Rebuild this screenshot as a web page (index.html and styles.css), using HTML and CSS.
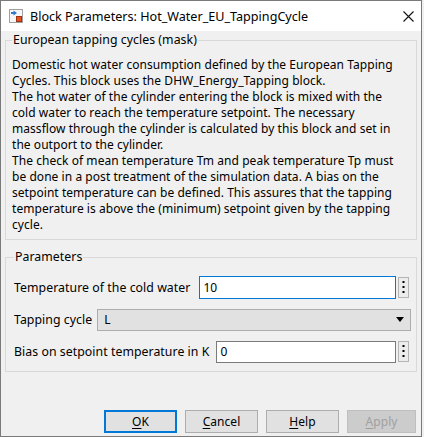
FILE: index.html
```html
<!DOCTYPE html>
<html lang="en">
<head>
<meta charset="utf-8">
<title>Block Parameters: Hot_Water_EU_TappingCycle</title>
<link rel="stylesheet" href="styles.css">
</head>
<body>
<div class="window">
  <div class="titlebar">
    <svg class="app-icon" width="14" height="14" viewBox="0 0 14 14">
      <rect x="0.5" y="0.5" width="13" height="13" fill="#f6f6f6" stroke="#a0a0a0"/>
      <path d="M2 4h3" stroke="#2f79c9" stroke-width="2"/>
      <path d="M4.5 1.5L8 4L4.5 6.5z" fill="#2f79c9"/>
      <rect x="7.5" y="7.5" width="5" height="5" fill="#e8501e" stroke="#9a3412"/>
    </svg>
    <span class="title">Block Parameters: Hot_Water_EU_TappingCycle</span>
    <svg class="close" width="11" height="11" viewBox="0 0 11 11">
      <path d="M0.5 0.5L10.5 10.5M10.5 0.5L0.5 10.5" stroke="#111" stroke-width="1.1"/>
    </svg>
  </div>
  <div class="content">
    <fieldset class="group group-desc">
      <legend>European tapping cycles (mask)</legend>
      <p class="desc">Domestic hot water consumption defined by the European Tapping<br>Cycles. This block uses the DHW_Energy_Tapping block.<br>The hot water of the cylinder entering the block is mixed with the<br>cold water to reach the temperature setpoint. The necessary<br>massflow through the cylinder is calculated by this block and set in<br>the outport to the cylinder.<br>The check of mean temperature Tm and peak temperature Tp must<br>be done in a post treatment of the simulation data. A bias on the<br>setpoint temperature can be defined. This assures that the tapping<br>temperature is above the (minimum) setpoint given by the tapping<br>cycle.</p>
    </fieldset>
    <fieldset class="group group-params">
      <legend>Parameters</legend>
      <div class="rows">
        <div class="row">
          <span class="label">Temperature of the cold water</span>
          <div class="field field-focused">10</div>
          <div class="more">
            <svg width="3" height="13" viewBox="0 0 3 13"><rect x="0.5" y="0" width="2" height="2" fill="#000"/><rect x="0.5" y="5" width="2" height="2" fill="#000"/><rect x="0.5" y="10" width="2" height="2" fill="#000"/></svg>
          </div>
        </div>
        <div class="row">
          <span class="label label-tight">Tapping cycle</span>
          <div class="select">
            <span>L</span>
            <svg width="8" height="5" viewBox="0 0 8 5"><path d="M0 0h8L4 5z" fill="#000"/></svg>
          </div>
        </div>
        <div class="row">
          <span class="label label-bias">Bias on setpoint temperature in K</span>
          <div class="field field-short">0</div>
          <div class="more">
            <svg width="3" height="13" viewBox="0 0 3 13"><rect x="0.5" y="0" width="2" height="2" fill="#000"/><rect x="0.5" y="5" width="2" height="2" fill="#000"/><rect x="0.5" y="10" width="2" height="2" fill="#000"/></svg>
          </div>
        </div>
      </div>
    </fieldset>
    <div class="buttons">
      <div class="btn btn-default"><u>O</u>K</div>
      <div class="btn"><u>C</u>ancel</div>
      <div class="btn"><u>H</u>elp</div>
      <div class="btn btn-disabled btn-apply"><u>A</u>pply</div>
    </div>
  </div>
</div>
</body>
</html>
```
FILE: styles.css
```css
* { box-sizing: border-box; }
html, body { margin: 0; padding: 0; }
body {
  background: #f0f0f0;
  font-family: "Noto Sans", "Liberation Sans", sans-serif;
  font-size: 12px;
  letter-spacing: 0.05px;
  color: #000;
}
.window {
  width: 422px;
  height: 437px;
  border: 1px solid #7a7a7a;
  background: #f0f0f0;
  display: flex;
  flex-direction: column;
}
.titlebar {
  height: 30px;
  background: #fff;
  display: flex;
  align-items: center;
  flex: none;
}
.app-icon { margin-left: 8px; flex: none; }
.title { margin-left: 7px; font-size: 12.6px; letter-spacing: 0; flex: 1; white-space: nowrap; }
.close { margin-right: 7px; flex: none; }
.content {
  flex: 1;
  display: flex;
  flex-direction: column;
  padding: 0 4px 3px 4px;
}
.group {
  margin: 0;
  border: 1px solid #d9d9d9;
  min-width: 0;
}
.group legend {
  padding: 0 1px;
  line-height: 16px;
  font-size: 12.3px;
}
.group-desc {
  margin-top: 1px;
  padding: 0 6px 6px 6px;
}
.desc {
  margin: 9px 0 0 0;
  line-height: 16px;
  white-space: nowrap;
}
.group-params {
  margin-top: 9px;
  padding: 0 5px 8px 8px;
}
.rows {
  margin-top: 11px;
  display: flex;
  flex-direction: column;
  gap: 9px;
}
.row {
  height: 23px;
  display: flex;
  align-items: center;
}
.label { white-space: nowrap; margin-right: 9px; font-size: 12.3px; }
.label-tight { margin-right: 5px; }
.label-bias { margin-right: 7px; }
.field {
  flex: 1;
  height: 23px;
  border: 1px solid #7a7a7a;
  background: #fff;
  padding-left: 3px;
  display: flex;
  align-items: center;
}
.field-focused { border-color: #0078d7; }
.field-short { height: 22px; }
.more {
  flex: none;
  width: 11px;
  height: 21px;
  margin: 0 2px;
  border: 1px solid #b4b4b4;
  background: #ececec;
  display: flex;
  align-items: center;
  justify-content: center;
}
.select {
  flex: 1;
  height: 22px;
  border: 1px solid #adadad;
  background: #e1e1e1;
  padding: 0 6px 0 6px;
  display: flex;
  align-items: center;
  justify-content: space-between;
}
.buttons {
  margin-top: auto;
  display: flex;
  justify-content: flex-end;
  gap: 8px;
  padding-right: 1px;
}
.btn {
  width: 73px;
  height: 23px;
  border: 1px solid #adadad;
  background: #e1e1e1;
  display: flex;
  align-items: center;
  justify-content: center;
  font-size: 12px;
}
.btn u { text-decoration-thickness: 1px; text-underline-offset: 2px; }
.btn-default { border: 2px solid #0078d7; }
.btn-disabled { background: #cccccc; border-color: #bfbfbf; color: #a0a0a0; }
.btn-apply { width: 69px; }
```
